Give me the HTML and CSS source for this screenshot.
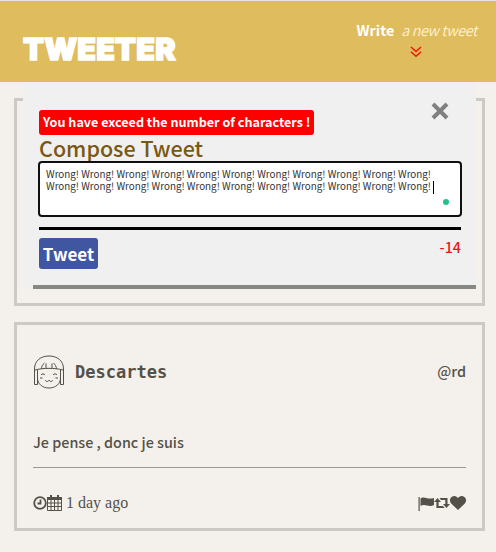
FILE: index.html
```html
<!DOCTYPE html>
<html lang="en">
<head>
<meta charset="utf-8">
<title>Tweeter</title>
<link rel="stylesheet" href="styles.css">
</head>
<body>
<nav class="topbar">
  <span class="logo">TWEETER</span>
  <div class="write">
    <div class="write-text"><b>Write</b><i>a new tweet</i></div>
    <svg class="chevrons" viewBox="0 0 12 12"><path d="M1 1l5 4.600L11 1M1 5.700l5 4.600 5-4.600"/></svg>
  </div>
</nav>
<main>
  <section class="compose-frame">
    <div class="compose">
      <svg class="close" viewBox="0 0 18 18"><path d="M2 2l14 14M16 2L2 16"/></svg>
      <div class="error">You have exceed the number of characters !</div>
      <h2>Compose Tweet</h2>
      <div class="field">
        Wrong! Wrong! Wrong! Wrong! Wrong! Wrong! Wrong! Wrong! Wrong! Wrong! Wrong!<br>
        Wrong! Wrong! Wrong! Wrong! Wrong! Wrong! Wrong! Wrong! Wrong! Wrong! Wrong!<span class="caret"></span>
        <span class="dot"></span>
      </div>
      <div class="actions">
        <button>Tweet</button>
        <output>-14</output>
      </div>
    </div>
  </section>
  <article class="tweet">
    <header>
      <svg class="avatar" viewBox="0 0 32 34">
        <path d="M4.500 29.500H1.500V14C1.500 5.500 8 1 16 1s14.500 4.500 14.500 13v15.500h-3"/>
        <path d="M4.500 15v8c0 6 5 10 11.500 10s11.500-4 11.500-10v-8M2 15c8-2.200 20-2.200 28 0M4.500 15v14.500M27.500 15v14.500M11.500 8c-2 1.500-3 3.500-3 6M13 8.500v5M19 8.500v5M20.500 8c1.500 1.500 3 3.500 3 6"/>
        <path d="M8 20c1-1.500 3-1.500 4 0M20 20c1-1.500 3-1.500 4 0M12.500 25c0 2 3 2 3.500 0 .5 2 3.500 2 3.500 0M7 23h2.500M22.500 23H25"/>
      </svg>
      <strong>Descartes</strong>
      <span class="handle">@rd</span>
    </header>
    <p>Je pense , donc je suis</p>
    <footer>
      <svg class="clock" viewBox="0 0 14 14"><circle cx="7" cy="7" r="5.800"/><path d="M7.500 3.500v4H4.500"/></svg>
      <svg class="calendar" viewBox="0 0 15 16"><path class="fill" d="M0 2h15v3H0zM3 0h2v4H3zM10 0h2v4h-2z"/><path d="M.5 4.500h14v11H.5zM4 5v10M7.500 5v10M11 5v10M1 8h13M1 11.500h13"/></svg>
      <time>1 day ago</time>
      <div class="icons">
        <svg class="flag" viewBox="0 0 16 15"><path class="fill" d="M.5 1h1.200v14H.5zM2.500 2.500c4-3 6 1.500 13.500-.5v7c-6 3-8-2-13.500 1z"/></svg>
        <svg class="retweet" viewBox="0 0 16 12"><path class="fill" d="M3.500 1L7 5H4.600v4H9l1.700 2H2.400V5H0zM5.500 1h8v6H16l-3.500 4L9 7h2.300V3H7z"/></svg>
        <svg class="heart" viewBox="0 0 16 14"><path class="fill" d="M8 14L1.200 7.400C-2 3.500 1.500 0 4.300 0 6 0 7.300 1 8 2.200 8.700 1 10 0 11.700 0c2.800 0 6.300 3.500 3.100 7.400z"/></svg>
      </div>
    </footer>
  </article>
</main>
</body>
</html>
```
FILE: styles.css
```css
* { box-sizing: border-box; }
body {
  margin: 0;
  background: #f4f0eb;
  color: #545149;
  font-family: "Noto Sans CJK JP", "Noto Sans", sans-serif;
}
svg { display: block; fill: none; stroke: #545149; flex: none; }
.fill { fill: #545149; stroke: none; }
.topbar {
  height: 82px;
  padding: 0 19px 0 23px;
  display: flex;
  justify-content: space-between;
  background: #dfbc5e;
  border-top: 1px solid #e4e4e4;
}
.logo {
  margin-top: 28px;
  font: 900 30.500px/40px Inter, sans-serif;
  letter-spacing: 0.200px;
  color: #fff;
  -webkit-text-stroke: 1.500px #fff;
}
.write { padding-top: 17px; color: #fff; font-size: 14.300px; line-height: 24px; }
.write-text { display: flex; gap: 7px; white-space: nowrap; }
.write i { color: #fff3cf; font-weight: 350; letter-spacing: -0.350px; }
.chevrons { width: 12px; height: 12px; margin: 4px auto 0 54px; stroke: #f01800; stroke-width: 1.500; }
main { padding: 16px 11px 0 14px; }
.compose-frame { height: 208px; border: 3px solid #cbcac7; }
.compose {
  position: relative;
  height: 207px;
  margin: -19px 6px 0 6px;
  padding: 28px 15px 0 16px;
  background: #f0f0f0;
}
.compose::after {
  content: "";
  position: absolute;
  left: 10px;
  right: 0;
  bottom: 0;
  height: 4px;
  background: #868884;
}
.close { position: absolute; left: 408px; top: 20px; width: 18px; height: 18px; stroke: #808080; stroke-width: 4; }
.error {
  width: 275px;
  height: 25px;
  padding-left: 4px;
  border-radius: 3px;
  background: #f00;
  color: #fff;
  font-size: 12.600px;
  font-weight: 700;
  line-height: 24px;
  white-space: nowrap;
}
h2 { margin: 0; height: 26px; color: #7b5811; font-size: 21.500px; font-weight: 500; line-height: 26px; }
.field {
  position: relative;
  height: 56px;
  margin: 0 -1px;
  padding: 5px 6px;
  border: 2px solid #101010;
  border-radius: 4px;
  background: #fff;
  color: #333;
  font-size: 9.840px;
  line-height: 12px;
  white-space: nowrap;
}
.caret { display: inline-block; width: 1px; height: 13px; margin-left: 2px; background: #000; vertical-align: -4px; }
.dot { position: absolute; right: 11px; bottom: 10px; width: 6px; height: 6px; border-radius: 50%; background: #21c08e; }
.actions {
  display: flex;
  justify-content: space-between;
  margin-top: 10px;
  padding-top: 8px;
  border-top: 3px solid #000;
}
button {
  width: 59px;
  height: 31px;
  padding: 0;
  border: 0;
  border-radius: 3px;
  background: #4056a1;
  color: #fff;
  font: 700 17px/30px "Noto Sans CJK JP", sans-serif;
}
output { color: #e81818; font-size: 14.300px; font-weight: 500; line-height: 18px; }
.tweet { height: 209px; margin-top: 16px; padding: 29px 16px 0; border: 3px solid #cbcac7; }
.tweet header { height: 36px; display: flex; align-items: center; }
.avatar { width: 32px; height: 34px; }
.tweet strong { margin-left: 10px; font: 700 17px "DejaVu Sans Mono", monospace; }
.handle { margin: -3px 0 0 auto; font-size: 14.400px; font-weight: 500; }
.tweet p { height: 77px; margin: 0; padding-top: 40px; font-size: 14.350px; font-weight: 500; line-height: 24px; }
.tweet footer {
  display: flex;
  align-items: center;
  height: 71px;
  border-top: 1px solid #999;
  font: 16px "Liberation Serif", serif;
}
.clock { width: 14px; height: 14px; stroke-width: 1.800; }
.calendar { width: 15px; height: 16px; }
time { margin-left: 4px; }
.icons { display: flex; align-items: center; margin-left: auto; }
.flag { width: 16px; height: 15px; }
.retweet { width: 16px; height: 12px; }
.heart { width: 16px; height: 14px; }
```
